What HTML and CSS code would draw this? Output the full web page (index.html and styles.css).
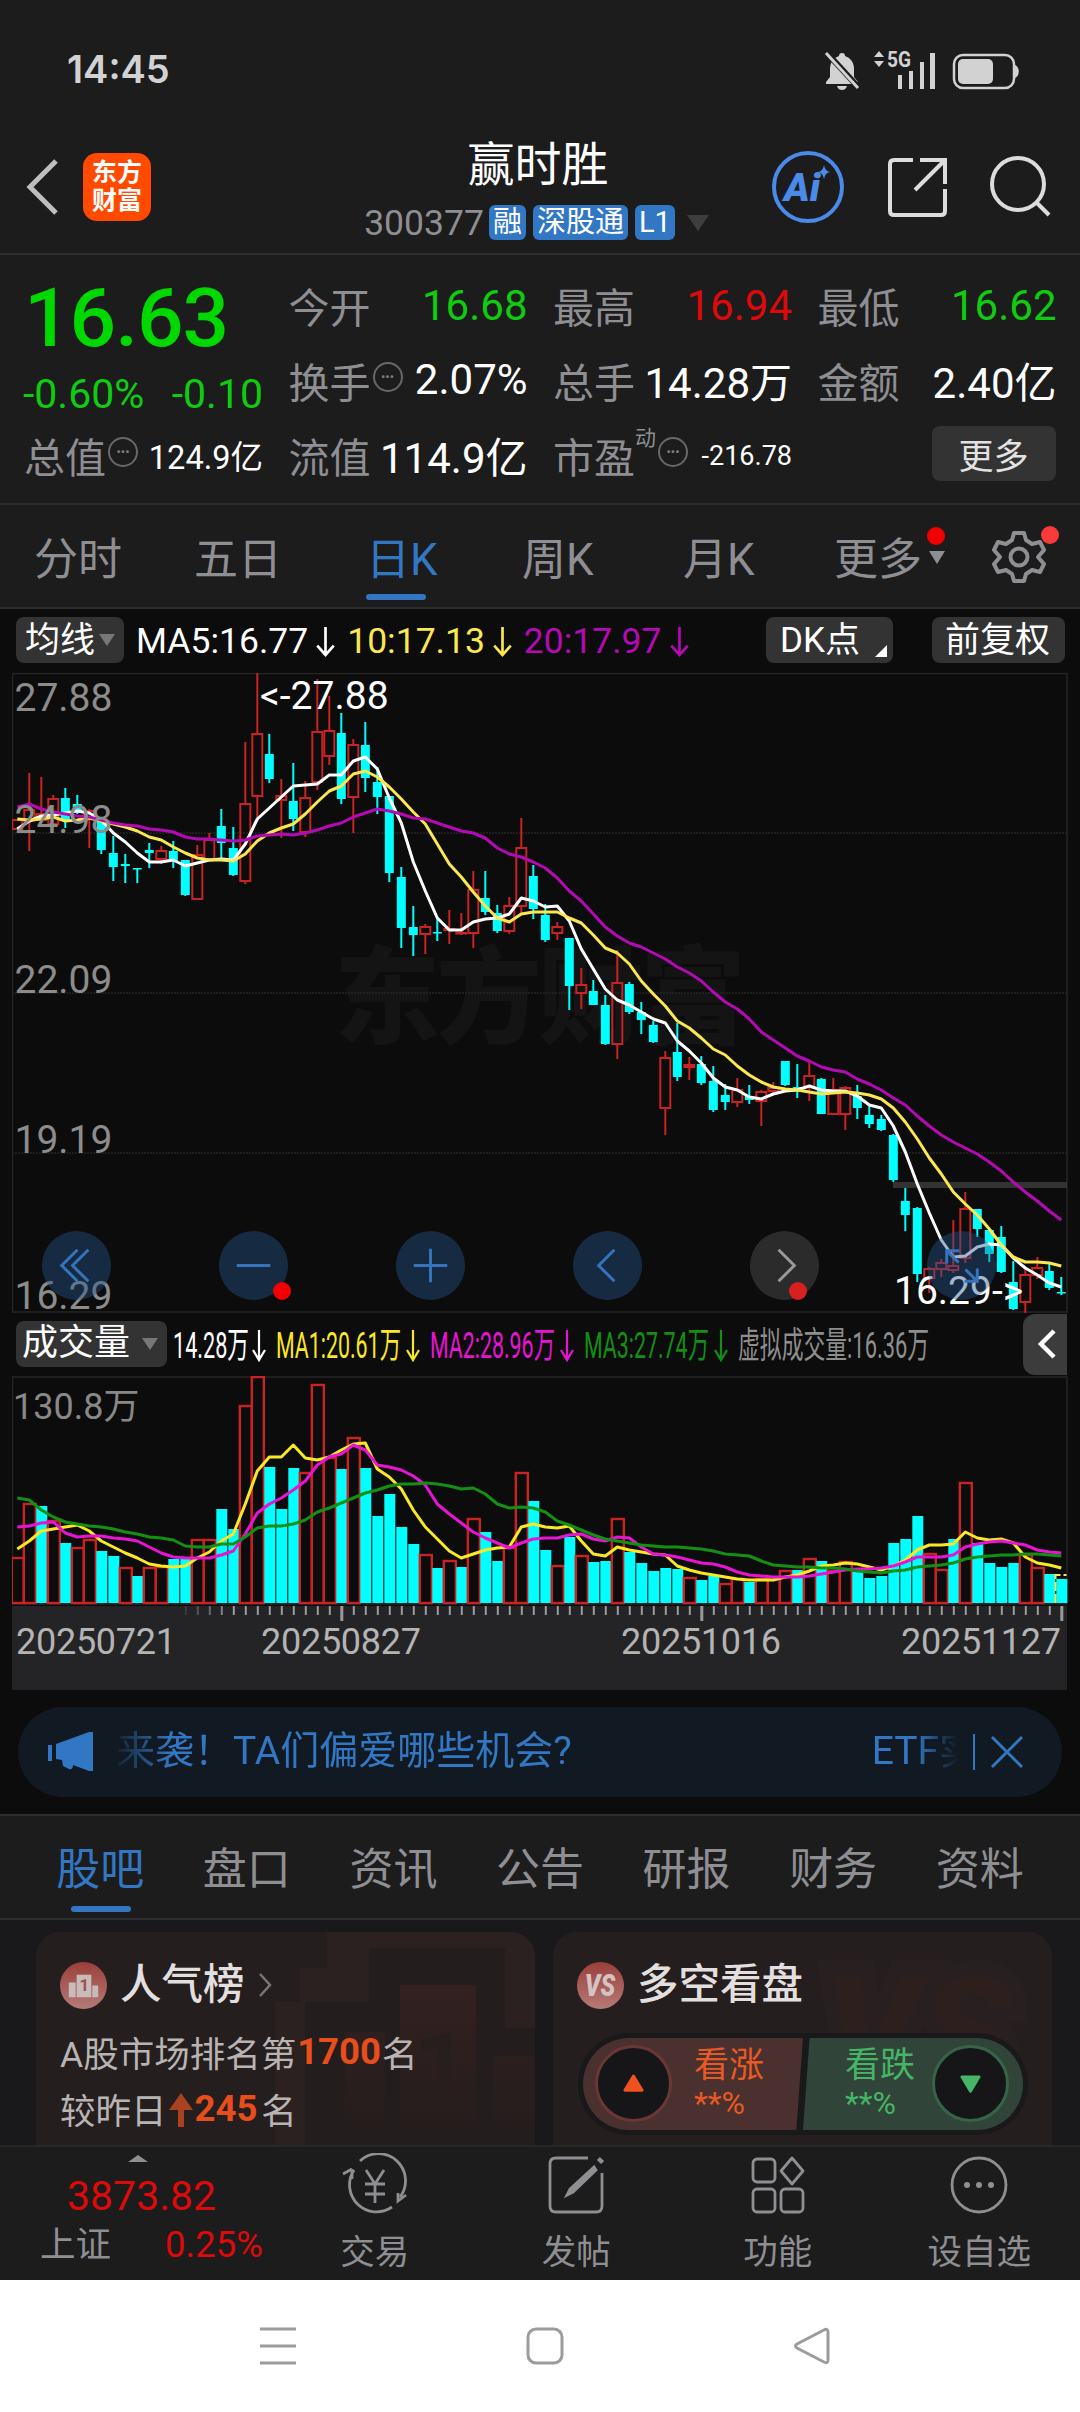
FILE: index.html
```html
<!DOCTYPE html>
<html lang="zh-CN">
<head>
    <meta charset="UTF-8">
    <meta name="viewport" content="width=device-width, initial-scale=1.0">
    <title>赢时胜 300377</title>
    <link rel="stylesheet" href="styles.css">
</head>
<body>
    <div class="status-bar">
        <div class="clock">14:45</div>
        <svg class="status-icons" width="200" height="44" viewBox="0 0 200 44">
            <g fill="#d2d2d2">
                <path d="M19 3c2 0 3 1 3 3 6 2 9 7 9 13v8l4 5v2H3v-2l4-5v-8c0-6 3-11 9-13 0-2 1-3 3-3z"/>
                <path d="M14 36h10c-1 3-3 4-5 4s-4-1-5-4z"/>
                <path d="M56 1l5 6H51zM56 17l5-6H51z"/>
                <rect x="75" y="25" width="4" height="14"/>
                <rect x="86" y="21" width="4" height="18"/>
                <rect x="97" y="12" width="4" height="27"/>
                <rect x="107" y="3" width="5" height="36"/>
                <rect x="135" y="9" width="35" height="25" rx="5"/>
                <path d="M192 15c5 2 5 11 0 13z"/>
            </g>
            <path d="M3 2l34 37" stroke="#1c1c1e" stroke-width="6"/>
            <path d="M3 3l32 35" stroke="#d2d2d2" stroke-width="3"/>
            <rect x="131" y="5" width="60" height="33" rx="9" fill="none" stroke="#d2d2d2" stroke-width="2.5"/>
            <text x="64" y="17" class="net" textLength="24" lengthAdjust="spacingAndGlyphs">5G</text>
        </svg>
    </div>

    <div class="header">
        <svg class="back" width="34" height="58" viewBox="0 0 34 58"><path d="M30 3L4 29l26 26" fill="none" stroke="#bebebe" stroke-width="5"/></svg>
        <div class="logo"><span>东方</span><span>财富</span></div>
        <div class="stock">
            <h1>赢时胜</h1>
            <div class="stock-meta">
                <span class="code">300377</span>
                <span class="badge">融</span>
                <span class="badge">深股通</span>
                <span class="badge">L1</span>
                <i class="caret"></i>
            </div>
        </div>
        <svg class="header-icons" width="290" height="80" viewBox="0 0 290 80">
            <circle cx="38" cy="40" r="34" fill="none" stroke="#4a8ae8" stroke-width="4"/>
            <text x="14" y="54" class="ai">Ai</text>
            <path d="M54 18q1 6 6 7-5 1-6 7-1-6-6-7 5-1 6-7z" fill="#4a8ae8"/>
            <g fill="none" stroke="#dcdcdc" stroke-width="4">
                <path d="M143 13h-19q-4 0-4 4v47q0 4 4 4h47q4 0 4-4V42"/>
                <path d="M150 13h25v24M175 13l-30 30"/>
                <circle cx="248" cy="37" r="26"/>
                <path d="M266 55l13 13"/>
            </g>
        </svg>
    </div>

    <div class="quote">
        <div class="price-box">
            <div class="price">16.63</div>
            <div class="change"><span>-0.60%</span><span>-0.10</span></div>
        </div>
        <div class="cell"><label>今开</label><b class="down">16.68</b></div>
        <div class="cell"><label>最高</label><b class="up">16.94</b></div>
        <div class="cell"><label>最低</label><b class="down">16.62</b></div>
        <div class="cell"><label>换手</label><i class="info">•••</i><b>2.07%</b></div>
        <div class="cell"><label>总手</label><b>14.28万</b></div>
        <div class="cell"><label>金额</label><b>2.40亿</b></div>
        <div class="cell"><label>总值</label><i class="info">•••</i><b class="mid">124.9亿</b></div>
        <div class="cell"><label>流值</label><b>114.9亿</b></div>
        <div class="cell"><label>市盈</label><sup>动</sup><i class="info">•••</i><b class="small">-216.78</b></div>
        <div class="cell end"><button class="more">更多</button></div>
    </div>

    <div class="period-tabs">
        <span class="tab">分时</span>
        <span class="tab">五日</span>
        <span class="tab active">日K</span>
        <span class="tab">周K</span>
        <span class="tab">月K</span>
        <span class="tab">更多<i class="tab-caret"></i><i class="dot"></i></span>
        <span class="gear">
            <svg width="54" height="54" viewBox="0 0 54 54" fill="none" stroke="#8e8e93" stroke-width="4">
                <path d="M22 3h10l2 7 6 4 8-2 4 8-6 7 6 7-4 8-8-2-6 4-2 7H22l-2-7-6-4-8 2-4-8 6-7-6-7 4-8 8 2 6-4z" stroke-linejoin="round"/>
                <circle cx="27" cy="27" r="8.5"/>
            </svg>
            <i class="dot light"></i>
        </span>
    </div>

    <div class="chart">
        <div class="legend">
            <span class="chip ma">均线<i class="chip-caret"></i></span>
            <span class="ma5">MA5:16.77<svg class="arrow" viewBox="0 0 20 30"><path d="M10 1v27M2 19l8 9 8-9"/></svg></span>
            <span class="ma10">10:17.13<svg class="arrow" viewBox="0 0 20 30"><path d="M10 1v27M2 19l8 9 8-9"/></svg></span>
            <span class="ma20">20:17.97<svg class="arrow" viewBox="0 0 20 30"><path d="M10 1v27M2 19l8 9 8-9"/></svg></span>
            <span class="chip dk">DK点<i class="corner"></i></span>
            <span class="chip fq">前复权</span>
        </div>

        <div class="panel">
            <svg id="kline" width="1056" height="640" viewBox="12 0 1056 640"></svg>
            <div class="controls">
                <span class="ctl"><svg viewBox="0 0 70 70"><path d="M36 19L20 35l16 16M47 19L31 35l16 16"/></svg></span>
                <span class="ctl"><svg viewBox="0 0 70 70"><path d="M18 35h34"/></svg><i class="dot"></i></span>
                <span class="ctl"><svg viewBox="0 0 70 70"><path d="M18 35h34M35 18v34"/></svg></span>
                <span class="ctl"><svg viewBox="0 0 70 70"><path d="M42 19L26 35l16 16"/></svg></span>
                <span class="ctl off"><svg viewBox="0 0 70 70"><path d="M29 19l16 16-16 16"/></svg><i class="dot"></i></span>
                <span class="ctl"><svg viewBox="0 0 70 70"><path d="M32 32L20 20m0 13V20h13M39 39l12 12m0-13v13H38"/></svg></span>
            </div>
        </div>

        <div class="vol-legend">
            <span class="chip vol">成交量<i class="chip-caret"></i></span>
            <svg width="840" height="60" viewBox="172 0 840 60" id="volLegend"></svg>
            <span class="collapse"><svg width="20" height="32" viewBox="0 0 20 32"><path d="M17 3L4 16l13 13" fill="none" stroke="#fff" stroke-width="4.5"/></svg></span>
        </div>

        <svg id="volume" class="volume" width="1056" height="314" viewBox="12 0 1056 314"></svg>
    </div>

    <div class="notice-wrap">
        <div class="notice">
            <svg width="48" height="42" viewBox="0 0 48 42" fill="#3277c4"><path d="M0 14h4v16H0zM8 13L41 1h4v39h-4l-16-6c0 4-2 5-4 4l-6-3-1-6-6-1z"/></svg>
            <div class="marquee"><span>来袭！TA们偏爱哪些机会?</span><span class="next">ETF实</span></div>
            <i class="bar"></i>
            <svg width="34" height="34" viewBox="0 0 34 34"><path d="M2 2l30 30M32 2L2 32" stroke="#3277c4" stroke-width="3"/></svg>
        </div>
    </div>

    <div class="info-tabs">
        <span class="active">股吧</span><span>盘口</span><span>资讯</span><span>公告</span><span>研报</span><span>财务</span><span>资料</span>
    </div>

    <div class="cards">
        <div class="card">
            <svg class="card-art" width="290" height="213" viewBox="0 0 290 213">
                <path d="M55 36h27V0h208v213H30V70h25z" fill="#2a2120"/>
                <path d="M124 16h136v80h30v117H60V70h64z" fill="#241d1d"/>
                <path d="M155 53h76v142h-76zM100 100h40v95h-40zM248 124h42v71h-42z" fill="url(#fade)"/>
                <path d="M206 100v46h-14v-32l-16 6V108z" fill="#271e1e"/>
                <defs>
                    <linearGradient id="fade" x1="0" y1="0" x2="0" y2="1">
                        <stop offset="0" stop-color="#332120"/>
                        <stop offset="1" stop-color="#251d1d"/>
                    </linearGradient>
                </defs>
            </svg>
            <div class="card-title">
                <span class="round"><svg viewBox="0 0 48 48"><path d="M9 21h7v15H9zM17 13h15v23H17zM33 24h6v12h-6z" fill="#c8bcbb"/><text x="20" y="30" class="one">1</text></svg></span>
                人气榜
                <svg class="chev" width="16" height="26" viewBox="0 0 16 26"><path d="M2 2l10 11L2 24" fill="none" stroke="#777" stroke-width="2.5"/></svg>
            </div>
            <p class="rank">A股市场排名第<em>1700</em>名</p>
            <p class="rank second">较昨日<svg width="26" height="36" viewBox="0 0 26 36"><path d="M13 1l12 17h-9v17h-6V18H1z" fill="#a8421f"/></svg><em>245</em><span>名</span></p>
        </div>
        <div class="card">
            <svg class="card-art" width="290" height="213" viewBox="0 0 290 213">
                <text x="62" y="150" class="vs-bg">VS</text>
            </svg>
            <div class="card-title">
                <span class="round"><svg viewBox="0 0 48 48"><text x="8" y="35" class="vs" textLength="31" lengthAdjust="spacingAndGlyphs">VS</text></svg></span>
                多空看盘
            </div>
            <div class="vote">
                <div class="vote-up">
                    <i class="knob"><svg viewBox="0 0 24 20"><path d="M12 2l9 15H3z" fill="#f0521d" stroke="#f0521d" stroke-width="3" stroke-linejoin="round"/></svg></i>
                    <div>看涨<small>**%</small></div>
                </div>
                <div class="vote-down">
                    <div>看跌<small>**%</small></div>
                    <i class="knob"><svg viewBox="0 0 24 20"><path d="M12 18L3 3h18z" fill="#45b566" stroke="#45b566" stroke-width="3" stroke-linejoin="round"/></svg></i>
                </div>
            </div>
        </div>
    </div>

    <div class="bottom-bar">
        <div class="index">
            <i class="tri"></i>
            <div class="index-value">3873.82</div>
            <div class="index-row"><span>上证</span><b>0.25%</b></div>
        </div>
        <div class="nav-item">
            <svg width="66" height="62" viewBox="0 0 66 62">
                <path d="M18 8A27 27 0 0 1 58 44M12 17A27 27 0 0 0 50 54M1 21l9-5M10 16v10M64 42l-8 6v-8M24 17l9 14 9-14M33 31v19M23 31h20M23 41h20"/>
            </svg>
            交易
        </div>
        <div class="nav-item">
            <svg width="58" height="62" viewBox="0 0 58 62">
                <path d="M41 5H9q-6 0-6 6v42q0 6 6 6h40q6 0 6-6V20"/>
                <path d="M47 14L23 36l-3 6 6-3 23-22z" fill="#8e8e93"/><path d="M52 9l3-3" stroke-width="6"/>
            </svg>
            发帖
        </div>
        <div class="nav-item">
            <svg width="54" height="62" viewBox="0 0 54 62">
                <rect x="2" y="6" width="22" height="23" rx="4"/><rect x="2" y="36" width="22" height="23" rx="4"/><rect x="30" y="36" width="22" height="23" rx="4"/>
                <path d="M41 5l11 13-11 13-11-13z" stroke-linejoin="round"/>
            </svg>
            功能
        </div>
        <div class="nav-item">
            <svg width="58" height="62" viewBox="0 0 58 62">
                <circle cx="29" cy="32" r="27"/>
                <g fill="#8e8e93" stroke="none"><circle cx="17" cy="32" r="3"/><circle cx="29" cy="32" r="3"/><circle cx="41" cy="32" r="3"/></g>
            </svg>
            设自选
        </div>
    </div>

    <div class="system-nav">
        <svg width="38" height="38" viewBox="0 0 38 38"><path d="M1 2h36M1 19h36M1 36h36"/></svg>
        <svg width="38" height="38" viewBox="0 0 38 38"><rect x="2" y="2" width="34" height="34" rx="8"/></svg>
        <svg width="38" height="38" viewBox="0 0 38 38"><path d="M35 5v28q0 4-4 2L4 21q-3-2 0-4L31 3q4-2 4 2z"/></svg>
    </div>

    <script src="chart.js"></script>
</body>
</html>
```
FILE: chart.js
```js
// candles: [up, high, bodyTop, bodyBottom, low, volume], y measured down from the panel top
const candles = [
    [1,146,146,156,156,46],[1,100,136,148,178,100],[0,104,140,147,147,97],[1,122,125,151,151,83],[0,115,125,148,155,60],[1,122,131,138,141,56],
    [1,136,137,144,175,64],[0,145,148,177,181,52],[0,163,180,194,208,47],[1,181,191,193,210,36],[0,195,195,196,210,27],[1,170,177,180,195,36],
    [1,173,177,186,191,37],[0,168,178,188,195,44],[0,187,187,222,223,44],[1,172,181,226,226,64],[1,160,166,187,187,64],[0,136,153,170,186,94],
    [0,154,175,202,203,74],[1,69,130,208,211,198],[1,0,60,123,148,227],[0,61,81,106,110,136],[0,106,122,127,165,94],[0,90,128,146,158,135],
    [1,108,124,159,164,131],[1,6,58,109,117,219],[1,23,57,83,92,146],[0,40,60,126,131,134],[1,66,71,124,160,166],[0,49,72,105,119,135],
    [0,94,109,124,141,87],[0,123,123,200,209,109],[0,194,204,255,275,76],[0,233,254,262,283,59],[1,251,253,261,281,49],[0,246,259,260,268,35],
    [1,237,255,257,271,43],[0,240,259,260,262,36],[1,198,216,260,275,85],[0,198,225,239,242,71],[0,232,240,258,260,42],[1,224,232,258,261,56],
    [1,145,174,233,241,131],[0,192,203,236,246,102],[0,231,242,267,269,53],[1,249,253,260,267,38],[0,265,265,313,337,66],[1,295,311,320,336,48],
    [0,307,318,332,332,41],[0,322,332,371,372,42],[1,277,309,371,386,85],[0,309,311,339,341,51],[0,329,339,347,361,40],[0,348,352,369,370,32],
    [0,378,384,435,462,35],[0,350,379,404,408,34],[1,384,391,394,407,26],[0,383,391,410,412,23],[0,393,408,437,439,27],[1,411,422,429,437,20],
    [1,405,416,429,434,25],[0,412,423,427,431,21],[1,417,418,428,453,25],[1,409,414,418,420,25],[1,388,388,412,413,33],[0,391,414,416,425,33],
    [1,387,402,414,428,45],[0,405,406,441,441,42],[1,405,416,441,441,33],[1,413,414,441,457,42],[0,412,423,435,446,31],[0,432,442,451,455,25],
    [0,442,446,457,458,27],[0,461,462,507,509,60],[0,515,528,542,558,64],[0,534,535,601,609,87],[1,594,595,605,620,50],[1,586,589,596,604,34],
    [0,547,592,597,600,64],[1,519,535,585,590,121],[0,536,536,556,564,60],[0,556,557,581,589,40],[0,553,564,599,600,36],[0,588,609,636,637,40],
    [1,596,601,629,640,49],[1,584,594,602,606,36],[0,591,598,615,617,29],[0,604,619,620,622,24]
];

// candles whose price body and volume bar are coloured differently
const redBody = [2, 22, 37, 54, 78];
const cyanBody = [5, 9, 11, 59, 64];

const ma5 = [156,148,143,142,140,138,140,147,160,169,180,189,189,187,193,190,187,186,187,171,146,135,124,113,112,111,102,102,88,84,96,125,150,189,218,245,257,257,249,246,245,241,225,228,234,233,248,276,296,316,327,332,339,346,350,368,378,390,405,414,417,424,426,421,418,417,413,417,418,418,423,432,435,453,479,511,540,567,584,583,574,571,572,585,595,602,610,614];
const ma10 = [146,147,146,144,148,147,145,148,151,154,158,164,167,174,180,185,187,187,188,181,168,160,155,151,141,129,118,113,101,98,104,114,126,139,151,171,191,204,219,233,245,249,241,239,239,239,245,250,262,275,280,291,308,321,333,348,355,365,376,382,393,402,409,414,416,417,419,421,420,419,420,422,426,435,449,466,485,501,519,531,542,556,572,584,589,589,590,593];
const ma20 = [134,131,136,139,141,143,144,147,150,152,153,156,157,159,164,166,166,167,168,167,163,162,161,162,160,157,153,150,144,140,136,138,141,145,146,150,154,158,160,165,175,181,184,189,195,205,218,228,241,254,263,270,274,280,286,294,300,308,319,329,336,346,359,367,375,383,388,394,397,399,406,411,417,425,432,443,453,462,469,475,481,489,498,509,519,528,538,547];

const vma1 = [54,62,72,74,76,78,72,62,56,50,45,39,37,36,37,45,51,62,69,99,132,146,146,158,145,143,146,153,159,160,134,126,114,93,76,64,52,45,49,53,55,56,76,79,76,75,77,62,49,47,56,53,51,49,48,37,33,30,28,26,24,23,23,23,26,28,32,37,38,40,39,36,33,37,43,53,58,58,59,71,65,63,64,60,46,40,38,35];
const vma2 = [76,77,80,81,70,66,67,67,65,64,62,56,50,46,45,45,45,48,52,69,90,99,105,113,122,138,146,149,158,153,138,136,133,127,118,99,89,80,71,65,60,55,60,64,65,65,68,69,64,62,66,65,56,49,48,46,43,40,39,36,31,28,27,26,26,26,27,29,31,33,34,34,35,37,41,46,46,46,48,56,59,61,62,60,58,53,51,50];
const vma3 = [105,103,93,86,81,79,77,76,74,71,69,66,65,63,57,56,56,59,59,66,75,77,77,79,83,91,95,100,105,110,113,117,119,119,120,119,117,114,115,109,99,95,96,95,91,82,78,73,68,64,62,60,58,57,56,56,55,54,52,49,48,47,42,38,37,36,36,35,35,34,32,31,30,32,33,36,37,38,40,44,46,47,48,48,49,49,48,47];

const RED = '#c92222';
const CYAN = '#00ffff';
const x = i => 17.3 + i * 12;

function line(values, color, toY) {
    const points = values.map((v, i) => `${x(i)},${toY(v)}`).join(' ');
    return `<polyline points="${points}" fill="none" stroke="${color}" stroke-width="3" stroke-linejoin="round"/>`;
}

function drawKline() {
    let s = '<rect x="12.5" y=".5" width="1054.5" height="638.5" fill="none" stroke="#262626" stroke-width="1.5"/>';
    s += '<text x="334" y="362" class="watermark" textLength="412">东方财富</text>';
    [160, 320, 480].forEach(y => {
        s += `<path d="M12 ${y}H1067" stroke="#242424" stroke-width="1.5" stroke-dasharray="2 1"/>`;
    });
    s += '<rect x="893" y="509" width="174" height="6" fill="#333"/>';

    candles.forEach(([up, high, top, bottom, low], i) => {
        const cx = x(i);
        const isUp = redBody.includes(i) || (up && !cyanBody.includes(i));
        const h = Math.max(bottom - top, 1.5);
        if (isUp) {
            s += `<path d="M${cx} ${high}V${top}M${cx} ${bottom}V${low}" stroke="${RED}" stroke-width="2"/>`;
            s += `<rect x="${cx - 5}" y="${top + 1}" width="10" height="${Math.max(h - 1, .5)}" fill="none" stroke="${RED}" stroke-width="2"/>`;
        } else {
            s += `<path d="M${cx} ${high}V${low}" stroke="${CYAN}" stroke-width="2"/>`;
            s += `<rect x="${cx - 4.5}" y="${top}" width="9" height="${h}" fill="${CYAN}"/>`;
        }
    });

    s += line(ma5, '#ffffff', v => v);
    s += line(ma10, '#fbe850', v => v);
    s += line(ma20, '#b40ab4', v => v);

    [['27.88', 38], ['24.98', 160], ['22.09', 320], ['19.19', 480], ['16.29', 636]].forEach(([t, y]) => {
        s += `<text x="14.5" y="${y}" class="scale">${t}</text>`;
    });
    s += '<text x="260" y="36" class="mark">&lt;-27.88</text>';
    s += '<text x="894" y="631" class="mark">16.29-&gt;</text>';
    document.getElementById('kline').innerHTML = s;
}

function drawVolume() {
    const base = 227;
    let s = '<rect x="12.5" y="1" width="1054.5" height="227" fill="none" stroke="#262626" stroke-width="1.5"/>';
    candles.forEach(([up, , , , , v], i) => {
        const cx = x(i);
        s += up
            ? `<rect x="${cx - 5.5}" y="${base - v + 1}" width="12" height="${v - 1}" fill="#0c0c0c" stroke="${RED}" stroke-width="2.4"/>`
            : `<rect x="${cx - 5}" y="${base - v}" width="11" height="${v}" fill="${CYAN}"/>`;
    });
    s += '<path d="M1055.5 227v-28h11" fill="none" stroke="#fbe850" stroke-width="2" stroke-dasharray="9 3"/>';
    s += line(vma1, '#fbe825', v => base - v);
    s += line(vma2, '#e714d4', v => base - v);
    s += line(vma3, '#138f13', v => base - v);
    s += '<text x="13" y="43" class="vol-scale">130.8万</text>';

    // time axis
    s += '<rect x="12" y="230" width="1055" height="84" fill="#242426"/>';
    for (let i = 14; i < 88; i++) {
        const big = i === 27 || i === 57 || i === 87;
        const fade = Math.min(1, .2 + (i - 14) * .2);
        s += `<path d="M${x(i) + .5} 230v${big ? 15 : 9}" stroke="#9a9a9a" stroke-width="${big ? 3 : 2}" opacity="${fade}"/>`;
    }
    [['20250721', 16], ['20250827', 261], ['20251016', 621], ['20251127', 901]].forEach(([t, tx]) => {
        s += `<text x="${tx}" y="278" class="date" textLength="160">${t}</text>`;
    });
    document.getElementById('volume').innerHTML = s;
}

function drawVolumeLegend() {
    const items = [
        ['14.28万', 173, 76, '#fff', 259],
        ['MA1:20.61万', 276, 125, '#fbe825', 413],
        ['MA2:28.96万', 430, 125, '#e714d4', 567],
        ['MA3:27.74万', 584, 125, '#138f13', 721],
        ['虚拟成交量:16.36万', 738, 191, '#8e8e8e', 0]
    ];
    document.getElementById('volLegend').innerHTML = items.map(([t, tx, w, color, ax]) =>
        `<text x="${tx}" y="44" fill="${color}" class="vol-text" textLength="${w}" lengthAdjust="spacingAndGlyphs">${t}</text>` +
        (ax ? `<path d="M${ax} 16v30M${ax - 6} 36l6 10 6-10" fill="none" stroke="${color}" stroke-width="2.2"/>` : '')
    ).join('');
}

drawKline();
drawVolume();
drawVolumeLegend();
```
FILE: styles.css
```css
* {
    margin: 0;
    padding: 0;
    box-sizing: border-box;
}

body {
    width: 1080px;
    height: 2412px;
    overflow: hidden;
    display: flex;
    flex-direction: column;
    background: #0c0c0c;
    color: #fff;
    font-family: Roboto, "Noto Sans CJK SC", sans-serif;
}

i, em {
    font-style: normal;
}

svg {
    display: block;
    flex: none;
}

.dot {
    position: absolute;
    width: 18px;
    height: 18px;
    border-radius: 50%;
    background: #f00000;
}

/* status bar */
.status-bar {
    height: 120px;
    padding: 50px 57px 0 67px;
    display: flex;
    justify-content: space-between;
    background: #1c1c1c;
}

.clock {
    font-family: Inter, sans-serif;
    font-size: 38px;
    line-height: 39px;
    font-weight: 600;
    color: #d2d2d2;
}

.net {
    font: 700 22px Roboto, sans-serif;
    fill: #d2d2d2;
}

/* header */
.header {
    height: 135px;
    padding-left: 26px;
    display: flex;
    background: #1c1c1c;
    border-bottom: 2px solid #2e2e2e;
}

.back {
    margin-top: 38px;
}

.logo {
    flex: none;
    width: 68px;
    height: 68px;
    margin: 33px 0 0 23px;
    border-radius: 14px;
    background: #ff4a00;
    display: flex;
    flex-direction: column;
    align-items: center;
    justify-content: center;
    font-size: 25px;
    line-height: 28px;
    font-weight: 700;
}

.stock {
    flex: none;
    width: 619px;
    padding-left: 155px;
    display: flex;
    flex-direction: column;
    align-items: center;
}

.stock h1 {
    margin-top: 13px;
    font-size: 47px;
    line-height: 64px;
    font-weight: 400;
}

.stock-meta {
    display: flex;
    align-items: center;
    height: 35px;
    margin: 8px 0 0 -3px;
}

.code {
    font-size: 35.5px;
    color: #8e8e93;
    margin-right: 5px;
}

.badge {
    height: 35px;
    margin-right: 7px;
    padding: 0 4px;
    border-radius: 6px;
    background: #3277c4;
    font-size: 29px;
    line-height: 34px;
}

.caret {
    margin-left: 5px;
    border: 11px solid transparent;
    border-bottom: 0;
    border-top: 16px solid #3e3e3e;
}

.header-icons {
    margin-top: 27px;
}

.ai {
    font: italic 900 39px Roboto, sans-serif;
    fill: #4a8ae8;
}

/* quote */
.quote {
    height: 250px;
    padding: 12px 24px 0;
    display: grid;
    grid-template-columns: repeat(4, 238px);
    grid-template-rows: repeat(3, 75px);
    column-gap: 26.5px;
    background: #1c1c1c;
    border-bottom: 2px solid #2e2e2e;
}

.price-box {
    grid-row: span 2;
}

.price {
    margin-top: 3px;
    font-size: 82px;
    line-height: 96px;
    font-weight: 500;
    letter-spacing: -1px;
    color: #00d800;
}

.change {
    display: flex;
    justify-content: space-between;
    margin: 2px -1px 0 -1px;
    font-size: 41px;
    line-height: 52px;
    color: #10cc10;
}

.cell {
    display: flex;
    align-items: center;
    white-space: nowrap;
}

.cell label {
    font-size: 41px;
    color: #8e8e93;
}

.cell b {
    margin: 0 -1px 0 auto;
    font-size: 42px;
    font-weight: 400;
}

.cell .down, .cell .up {
    padding-top: 2px;
}

.cell .down {
    color: #10cc10;
}

.cell .up {
    color: #dc0a0a;
}

.cell .mid {
    font-size: 32.5px;
}

.cell .small {
    font-size: 27px;
    padding-top: 2px;
}

.cell sup {
    margin-top: -38px;
    font-size: 21px;
    color: #8e8e93;
}

.info {
    width: 30px;
    height: 30px;
    margin: -5px 0 0 2px;
    border: 2px solid #68686c;
    border-radius: 50%;
    font-size: 13px;
    line-height: 25px;
    text-align: center;
    color: #7e7e82;
}

.end {
    justify-content: flex-end;
}

.more {
    width: 124px;
    height: 55px;
    margin-top: -3px;
    border: 0;
    border-radius: 8px;
    background: #333;
    color: #e2e2e2;
    font: 35px/51px "Noto Sans CJK SC", sans-serif;
}

/* period tabs */
.period-tabs {
    height: 104px;
    padding-left: 34px;
    display: grid;
    grid-template-columns: 160px 172px 156px 161px 151px 158px 60px;
    background: #1c1c1c;
    border-bottom: 2px solid #2e2e2e;
    font-size: 44px;
    line-height: 110px;
    color: #8e8e93;
}

.tab {
    position: relative;
    height: 102px;
    justify-self: start;
    white-space: nowrap;
}

.active {
    color: #3277c4;
    position: relative;
}

.active::after {
    content: '';
    position: absolute;
    left: 0;
    bottom: 7px;
    width: 60px;
    height: 6px;
    border-radius: 3px;
    background: #3277c4;
}

.tab-caret {
    position: absolute;
    left: 95px;
    top: 46px;
    border: 8px solid transparent;
    border-bottom: 0;
    border-top: 13px solid #8e8e93;
}

.tab .dot {
    left: 93px;
    top: 22px;
}

.gear {
    position: relative;
    padding-top: 25px;
}

.gear .dot {
    left: 49px;
    top: 21px;
}

.dot.light {
    background: #f83a3a;
}

/* chart */
.chart {
    height: 1081px;
    padding-left: 12px;
}

.legend {
    height: 64px;
    padding: 8px 15px 0 4px;
    display: flex;
    font-size: 35.5px;
    line-height: 49px;
    white-space: nowrap;
}

.legend > span {
    display: flex;
}

.chip {
    height: 46px;
    border-radius: 8px;
    background: #333;
    font-size: 35px;
    line-height: 45px;
    position: relative;
}

.legend .chip {
    line-height: 47px;
}

.chip.ma {
    width: 108px;
    padding-left: 9px;
    margin-right: 12px;
}

.chip-caret {
    position: absolute;
    right: 9px;
    top: 17px;
    border: 8px solid transparent;
    border-bottom: 0;
    border-top: 12px solid #777;
}

.arrow {
    width: 21px;
    height: 31px;
    margin: 9px 11px 0 7px;
    fill: none;
    stroke: currentColor;
    stroke-width: 2.6;
}

.ma10 {
    color: #fbe850;
}

.ma20 {
    color: #b40ab4;
}

.legend .dk {
    width: 127px;
    margin-left: auto;
    padding-left: 14px;
}

.corner {
    position: absolute;
    right: 6px;
    bottom: 6px;
    border-left: 12px solid transparent;
    border-bottom: 12px solid #fff;
}

.legend .fq {
    width: 133px;
    margin-left: 39px;
    padding-left: 13px;
}

.panel {
    position: relative;
    height: 640px;
}

.controls {
    position: absolute;
    left: 30px;
    top: 558px;
    display: flex;
    gap: 108px;
}

.ctl {
    position: relative;
    width: 69px;
    height: 69px;
    border-radius: 50%;
    background: rgba(38, 86, 142, 0.42);
}

.ctl svg {
    width: 69px;
    height: 69px;
    fill: none;
    stroke: #3574bd;
    stroke-width: 3;
}

.ctl.off {
    background: rgba(70, 70, 70, 0.55);
}

.ctl.off svg {
    stroke: #999;
}

.ctl .dot {
    right: -3px;
    bottom: 0;
}

.ctl.off .dot {
    right: 12px;
    background: #d82020;
}

.scale {
    font-size: 39px;
    fill: #8c8c8c;
}

.mark {
    font-size: 39px;
    fill: #fff;
}

.watermark {
    font-family: "Noto Sans CJK SC", sans-serif;
    font-size: 106px;
    font-weight: 900;
    fill: #141414;
}

.vol-legend {
    height: 63px;
    display: flex;
    justify-content: space-between;
    padding: 1px 13px 0 4px;
}

.chip.vol {
    width: 151px;
    margin-top: 7px;
    padding-left: 6px;
    font-size: 36px;
}

.vol-legend > svg {
    margin: 0 auto 0 5px;
}

.vol-text {
    font-size: 36px;
}

.collapse {
    width: 44px;
    height: 61px;
    padding: 14px 0 0 14px;
    border-radius: 12px 0 0 12px;
    background: #3c3c3c;
}

.vol-scale {
    font-size: 36px;
    fill: #888;
}

.date {
    font-size: 36px;
    fill: #b4b4b4;
}

/* notice */
.notice-wrap {
    height: 124px;
    padding: 17px 18px 0;
}

.notice {
    height: 90px;
    padding: 0 38px 0 30px;
    display: flex;
    align-items: center;
    border-radius: 45px;
    background: #111a23;
    color: #3277c4;
    font-size: 39px;
}

.marquee {
    width: 848px;
    height: 60px;
    margin-left: 15px;
    padding-left: 5px;
    display: flex;
    justify-content: space-between;
    line-height: 58px;
    overflow: hidden;
    white-space: nowrap;
    -webkit-mask-image: linear-gradient(90deg, transparent, #000 7%, #000 95%, transparent 100%);
    mask-image: linear-gradient(90deg, transparent, #000 7%, #000 95%, transparent 100%);
}

.next {
    margin-right: -20px;
}

.bar {
    width: 2px;
    height: 36px;
    margin: 0 15px 0 15px;
    background: #3277c4;
}

/* info tabs */
.info-tabs {
    height: 106px;
    padding: 0 27px;
    display: grid;
    grid-template-columns: repeat(7, 1fr);
    background: #1c1c1c;
    border-top: 2px solid #2e2e2e;
    border-bottom: 2px solid #2e2e2e;
    font-size: 44px;
    line-height: 108px;
    text-align: center;
    color: #8e8e93;
}

.info-tabs span {
    height: 102px;
}

.info-tabs .active::after {
    left: 44px;
    bottom: 6px;
}

/* cards */
.cards {
    height: 225px;
    padding: 12px 28px 0 36px;
    display: grid;
    grid-template-columns: 499px 499px;
    gap: 18px;
    background: #19191b;
    overflow: hidden;
}

.card {
    position: relative;
    height: 240px;
    padding: 29px 25px 0 24px;
    border-radius: 24px;
    background: #251e1e;
    overflow: hidden;
}

.card > * {
    position: relative;
}

.card .card-art {
    position: absolute;
    right: 0;
    top: 0;
}

.vs-bg {
    font: italic 900 150px Roboto, sans-serif;
    fill: #2e1f1f;
    stroke: #282020;
    stroke-width: 30px;
    paint-order: stroke;
}

.card-title {
    height: 48px;
    display: flex;
    align-items: center;
    font-size: 41.5px;
    line-height: 44px;
    font-weight: 500;
    color: #e2dfdf;
}

.round {
    width: 47px;
    height: 47px;
    margin-right: 13px;
    border-radius: 50%;
    background: linear-gradient(#9a3f3a, #b67a77);
}

.one {
    font: 700 17px Roboto, sans-serif;
    fill: #9d5350;
}

.vs {
    font: italic 900 31px Roboto, sans-serif;
    fill: #d3c4c3;
}

.chev {
    margin-left: 13px;
}

.rank {
    margin-top: 14px;
    height: 57px;
    display: flex;
    align-items: center;
    font-size: 35.5px;
    color: #b8b4b4;
}

.rank.second {
    margin-top: 0;
}

.rank em {
    margin: 0 1px;
    font-size: 36.5px;
    font-weight: 700;
    color: #e84e1c;
}

.rank svg {
    margin: 3px 0 0 1px;
}

.rank span {
    margin-left: 3px;
}

.vote {
    width: 450px;
    height: 102px;
    margin: 24px 0 0 1px;
    padding: 5px;
    display: flex;
    border-radius: 51px;
    background: #19181a;
}

.vote-up, .vote-down {
    display: flex;
    width: 223px;
    padding: 10px 10px 10px 12px;
    font-size: 35px;
    line-height: 40px;
}

.vote small {
    display: block;
    font-size: 32px;
    line-height: 34px;
}

.vote-up {
    border-radius: 46px 0 0 46px;
    background: #4a302e;
    color: #e85a25;
    clip-path: polygon(0 0, 100% 0, 97% 100%, 0 100%);
}

.vote-down {
    padding-right: 14px;
    justify-content: flex-end;
    border-radius: 0 46px 46px 0;
    background: #304439;
    color: #45b566;
    clip-path: polygon(3% 0, 100% 0, 100% 100%, 0 100%);
}

.vote-up div {
    margin: -2px 0 0 22px;
}

.vote-down div {
    margin: -2px 17px 0 0;
}

.knob {
    width: 77px;
    height: 77px;
    margin-top: -3px;
    padding: 26px 24px;
    border: 3px solid #6a3735;
    border-radius: 50%;
    background: #161618;
}

.vote-down .knob {
    border-color: #376448;
}

/* bottom bar */
.bottom-bar {
    height: 135px;
    display: grid;
    grid-template-columns: 274px repeat(4, 201.5px);
    background: #1c1c1c;
    border-top: 2px solid #272727;
}

.index {
    padding-left: 40px;
    position: relative;
}

.tri {
    display: block;
    margin: 8px 0 0 88px;
    width: 0;
    border: 10px solid transparent;
    border-top: 0;
    border-bottom: 7px solid #8e8e93;
}

.index-value {
    margin: 8px 0 0 27px;
    font-size: 41px;
    line-height: 52px;
    color: #dc0a0a;
}

.index-row {
    width: 223px;
    display: flex;
    justify-content: space-between;
    font-size: 35.5px;
    line-height: 46px;
    color: #8e8e93;
}

.index-row b {
    font-weight: 400;
    font-size: 36.5px;
    color: #dc0a0a;
}

.nav-item {
    display: flex;
    flex-direction: column;
    align-items: center;
    padding-top: 6px;
    font-size: 34.5px;
    line-height: 75px;
    color: #8e8e93;
}

.nav-item svg {
    fill: none;
    stroke: #8e8e93;
    stroke-width: 2.8;
}

/* system navigation */
.system-nav {
    height: 132px;
    padding: 47px 249px 0 259px;
    display: flex;
    justify-content: space-between;
    background: #fff;
}

.system-nav svg {
    fill: none;
    stroke: #9c9c9c;
    stroke-width: 3;
}
```
